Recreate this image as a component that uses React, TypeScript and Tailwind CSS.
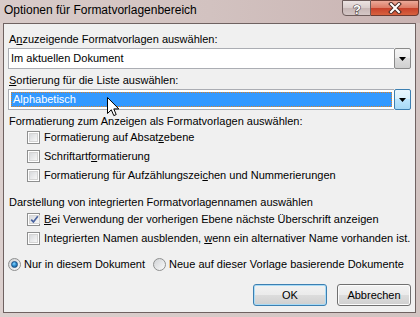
function Arrow() {
  return (
    <svg width="7" height="4" viewBox="0 0 7 4">
      <path d="M0 0 H7 L3.5 4 Z" fill="#000" />
    </svg>
  );
}

function Check({ checked, label }: { checked?: boolean; label: React.ReactNode }) {
  return (
    <div className="flex items-center h-[19px] pl-[19px] gap-[4px]">
      <span className="w-[13px] h-[13px] border border-[#8e8f8f] bg-white p-px flex">
        <span className="flex-1 border border-[#d4d4d4] bg-gradient-to-br from-[#d8dadd] to-[#f7f7f7] flex items-center justify-center">
          {checked && (
            <svg width="9" height="9" viewBox="0 0 9 9">
              <path d="M1.2 4.6 L3.4 6.9 L7.8 1.2" fill="none" stroke="#4a64a0" strokeWidth="1.7" />
            </svg>
          )}
        </span>
      </span>
      <span>{label}</span>
    </div>
  );
}

function Radio({ checked, label }: { checked?: boolean; label: string }) {
  return (
    <div className="flex items-center gap-[3px]">
      <span className="w-[13px] h-[13px] rounded-full border border-[#8e8f8f] bg-gradient-to-br from-[#d0d2d5] to-[#fafafa] flex items-center justify-center">
        {checked && (
          <span className="w-[7px] h-[7px] rounded-full bg-[radial-gradient(circle_at_40%_35%,#8fd6ff_0%,#2d8fd0_45%,#134d7e_100%)] border border-[#1b4f86]" />
        )}
      </span>
      <span>{label}</span>
    </div>
  );
}

function Button({ label, isDefault }: { label: string; isDefault?: boolean }) {
  return (
    <div
      className={
        "w-[74px] h-full rounded-[3px] border flex items-center justify-center bg-[linear-gradient(#f2f2f2_0%,#ebebeb_50%,#dddddd_50%,#cfcfcf_100%)] " +
        (isDefault ? "border-[#3c7fb1] shadow-[inset_0_0_0_1px_#a9dbf6]" : "border-[#707070] shadow-[inset_0_0_0_1px_#fcfcfc]")
      }
    >
      {label}
    </div>
  );
}

export default function App() {
  return (
    <div className="relative w-[420px] h-[317px] overflow-hidden flex flex-col bg-gradient-to-r from-[#dcd0ce] to-[#d2c3c1] font-['Liberation_Sans',Arial,sans-serif] text-[11px] text-black">
      <div className="h-[23px] flex items-start bg-gradient-to-r from-[#d8cbc9] via-[#d2c2c0] to-[#c9b3b2]">
        <span className="pl-[4px] pt-[2px] text-[12px] leading-[16px]">Optionen für Formatvorlagenbereich</span>
        <div className="ml-auto mr-px flex h-[16px]">
          <div className="w-[29px] h-full border border-[#6d5c5b] rounded-bl-[4px] bg-[linear-gradient(#ece3e2_0%,#d9cdcc_50%,#c6b6b5_50%,#d4c6c5_100%)] flex items-center justify-center">
            <svg width="12" height="13" viewBox="0 0 12 13">
              <text x="6" y="11.5" textAnchor="middle" fontSize="13" fontWeight="bold" fontFamily="Liberation Sans" fill="#fff" stroke="#4a4040" strokeWidth="1.2" paintOrder="stroke">?</text>
            </svg>
          </div>
          <div className="w-[48px] h-full border border-l-0 border-[#6d3a30] rounded-br-[4px] bg-[linear-gradient(#eba999_0%,#dc7a64_50%,#c6402a_50%,#d8623f_100%)] flex items-center justify-center">
            <svg width="14" height="12" viewBox="0 0 14 12">
              <path d="M3 2 L11 10 M11 2 L3 10" stroke="#4b2a24" strokeWidth="4" strokeLinecap="square" />
              <path d="M3 2 L11 10 M11 2 L3 10" stroke="#fff" strokeWidth="2" strokeLinecap="square" />
            </svg>
          </div>
        </div>
      </div>

      <div className="flex-1 ml-[3px] mr-[4px] mb-[4px] border border-[#6f6261] bg-[#f0f0f0] flex flex-col px-[4px]">
        <div className="mt-[8px] h-[14px] leading-[14px] pl-px">
          A<u>n</u>zuzeigende Formatvorlagen auswählen:
        </div>
        <div className="mt-[2px] h-[21px] flex">
          <div className="flex-1 border-y border-l border-[#abadb3] bg-white pl-[2px] flex items-center">Im aktuellen Dokument</div>
          <div className="w-[17px] border border-[#8a8a8a] rounded-[2px] bg-[linear-gradient(#f4f4f4_0%,#ebebeb_50%,#dddddd_50%,#cfcfcf_100%)] flex items-center justify-center">
            <Arrow />
          </div>
        </div>

        <div className="mt-[4px] h-[14px] leading-[14px] pl-px">
          <u>S</u>ortierung für die Liste auswählen:
        </div>
        <div className="mt-[2px] h-[21px] flex">
          <div className="flex-1 border-y border-l border-[#abadb3] bg-white p-[2px] flex">
            <div className="flex-1 bg-[#3399ff] border border-dotted border-[#d9822b] text-white flex items-center pl-px">Alphabetisch</div>
          </div>
          <div className="w-[17px] border border-[#3c7fb1] rounded-[2px] bg-[linear-gradient(#eaf6fd_0%,#d9f0fc_50%,#bee6fd_50%,#a7d9f5_100%)] flex items-center justify-center">
            <Arrow />
          </div>
        </div>

        <div className="mt-[5px] h-[13px] leading-[13px] pl-px">Formatierung zum Anzeigen als Formatvorlagen auswählen:</div>
        <Check label={<>Formatierung auf Absat<u>z</u>ebene</>} />
        <Check label={<>Schriftartf<u>o</u>rmatierung</>} />
        <Check label={<>Formatierung für Aufzählungszei<u>c</u>hen und Nummerierungen</>} />

        <div className="mt-[10px] h-[14px] leading-[14px] pl-px">Darstellung von integrierten Formatvorlagennamen auswählen</div>
        <div className="mt-px" />
        <Check checked label={<><u>B</u>ei Verwendung der vorherigen Ebene nächste Überschrift anzeigen</>} />
        <Check label={<>Integrierten Namen ausblenden, <u>w</u>enn ein alternativer Name vorhanden ist.</>} />

        <div className="mt-[7px] h-[19px] flex items-center gap-[8px]">
          <Radio checked label="Nur in diesem Dokument" />
          <Radio label="Neue auf dieser Vorlage basierende Dokumente" />
        </div>

        <div className="mt-[10px] h-[22px] flex justify-end gap-[10px]">
          <Button label="OK" isDefault />
          <Button label="Abbrechen" />
        </div>
      </div>

      <svg className="absolute left-[107px] top-[97px]" width="13" height="20" viewBox="0 0 13 20">
        <path d="M0.5 0.5 L0.5 16.5 L4.3 12.8 L6.8 18.6 L9.2 17.6 L6.8 11.9 L11.8 11.9 Z" fill="#fff" stroke="#000" strokeWidth="1" strokeLinejoin="miter" />
      </svg>
    </div>
  );
}
